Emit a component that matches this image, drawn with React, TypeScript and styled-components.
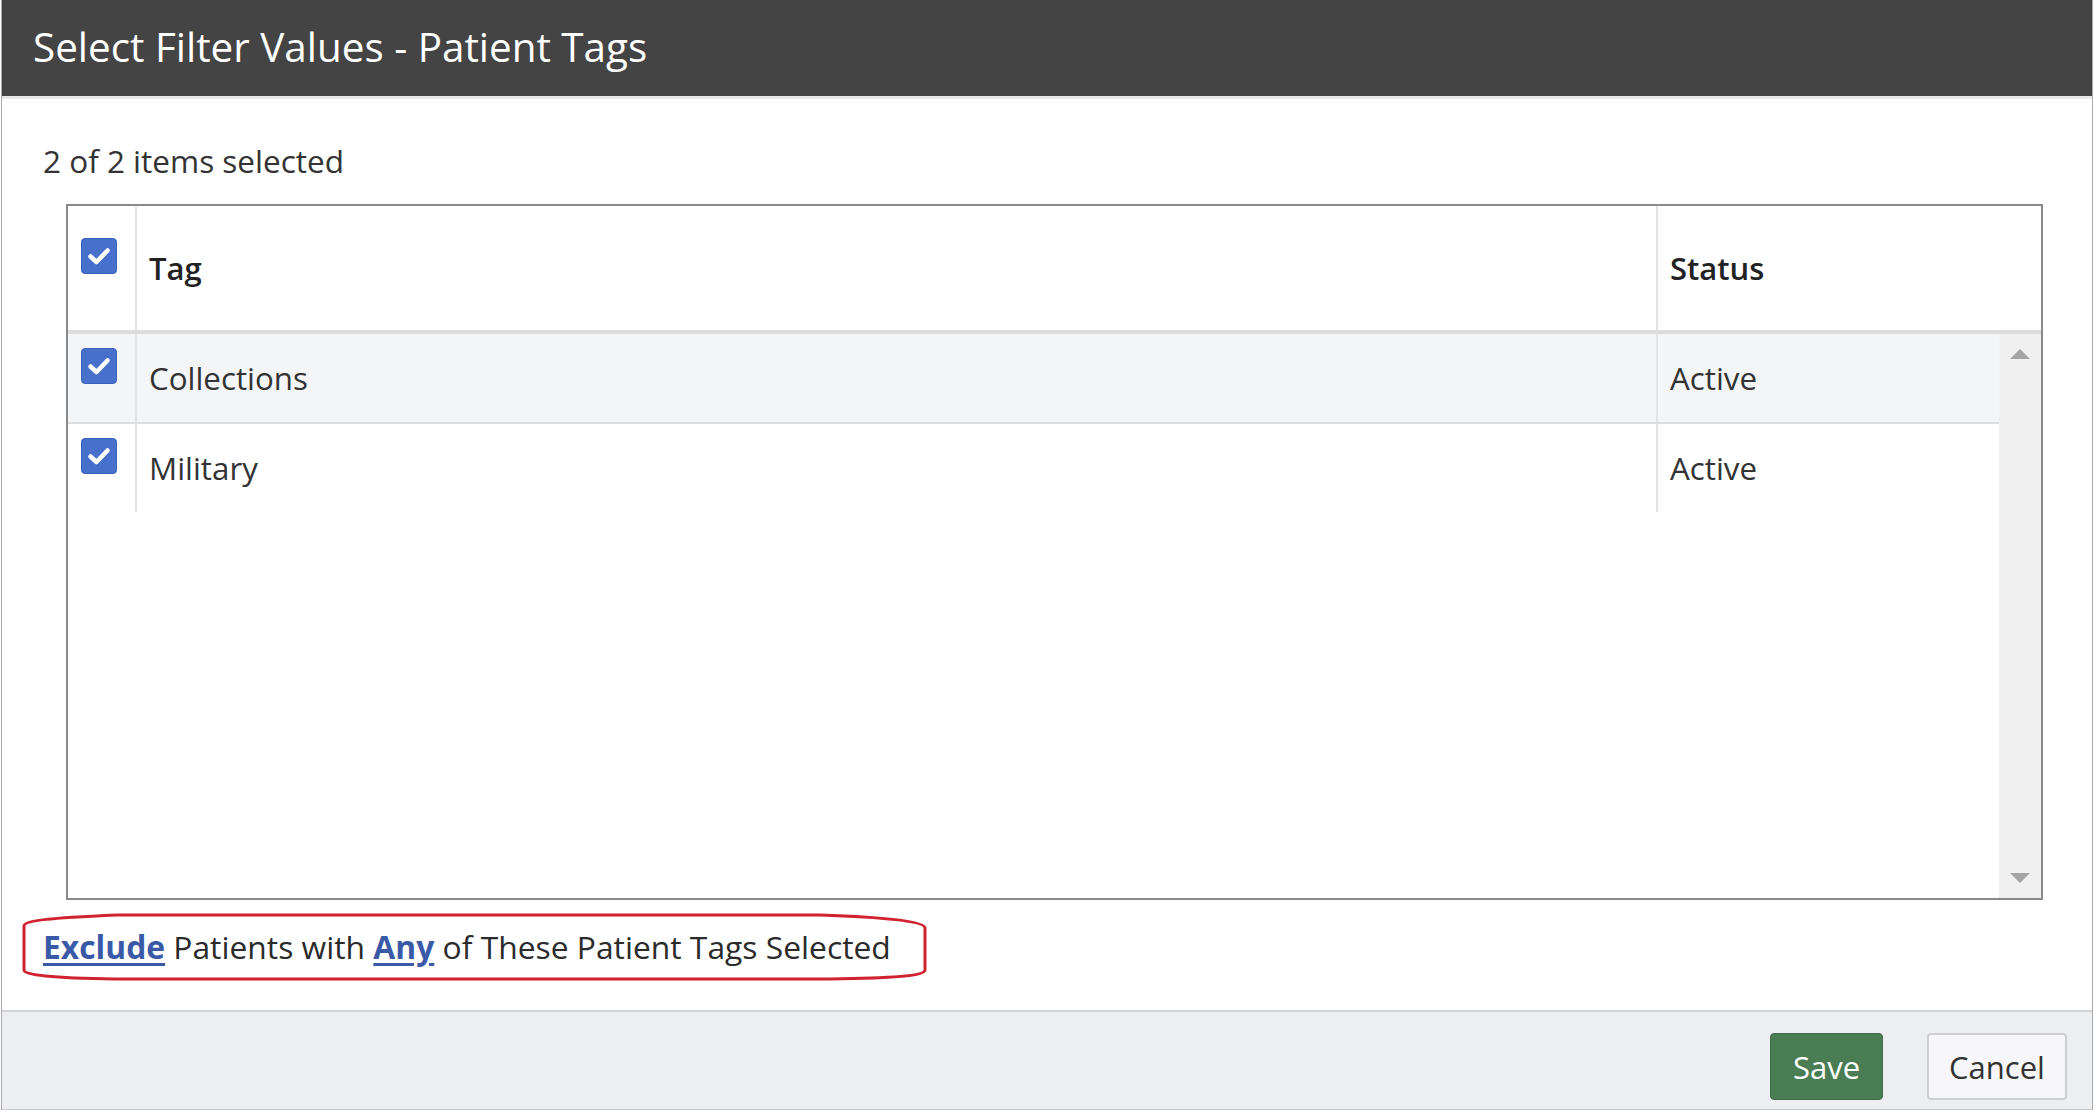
import React from 'react'
import styled, { createGlobalStyle } from 'styled-components'

const GlobalStyle = createGlobalStyle`
  html, body {
    margin: 0;
    padding: 0;
    background: #ffffff;
  }
  body {
    font-family: 'Open Sans', 'Liberation Sans', sans-serif;
    color: #333333;
  }
`

type Tag = { name: string; status: string }

const tags: Tag[] = [
  { name: 'Collections', status: 'Active' },
  { name: 'Military', status: 'Active' },
]

const CheckBox = () => (
  <Box>
    <svg width="36" height="36" viewBox="0 0 36 36">
      <polyline
        points="9.5,18.5 15.5,24 26.5,12.5"
        fill="none"
        stroke="#ffffff"
        strokeWidth="4.5"
        strokeLinecap="round"
        strokeLinejoin="round"
      />
    </svg>
  </Box>
)

const App = () => {
  return (
    <>
      <GlobalStyle />
      <Dialog>
        <TitleBar>
          <Title>Select Filter Values - Patient Tags</Title>
        </TitleBar>
        <Content>
          <Count>2 of 2 items selected</Count>
          <Table>
            <HeadRow>
              <CheckCell>
                <CheckBox />
              </CheckCell>
              <HeadCell $divider>Tag</HeadCell>
              <HeadCell>Status</HeadCell>
            </HeadRow>
            <TableBody>
              <Rows>
                {tags.map((t, i) => (
                  <Row key={t.name} $shaded={i === 0} $last={i === tags.length - 1}>
                    <CheckCell>
                      <CheckBox />
                    </CheckCell>
                    <Cell $divider>{t.name}</Cell>
                    <Cell>{t.status}</Cell>
                  </Row>
                ))}
              </Rows>
              <ScrollTrack>
                <Arrow $up />
                <Arrow />
              </ScrollTrack>
            </TableBody>
          </Table>
          <Oval>
            <OvalLine viewBox="0 0 905 69" preserveAspectRatio="none">
              <path
                d="M 2 14 C 2 8, 30 6, 95 3 L 798 3 C 860 5, 903 9, 903 16 L 903 58 C 903 63, 880 66, 808 67 L 93 67 C 30 66, 2 63, 2 58 Z"
                fill="none"
                stroke="#d1232f"
                strokeWidth="3"
              />
            </OvalLine>
            <RuleText>
              <LinkWord>Exclude</LinkWord> Patients with <LinkWord>Any</LinkWord> of These
              Patient Tags Selected
            </RuleText>
          </Oval>
        </Content>
        <Footer>
          <SaveButton>Save</SaveButton>
          <CancelButton>Cancel</CancelButton>
        </Footer>
      </Dialog>
    </>
  )
}
export default App

export const Dialog = styled.div`
  margin-left: 1px;
  width: 2092px;
  box-sizing: border-box;
  border-left: 1px solid #a8a8a8;
  border-right: 1px solid #a8a8a8;
  display: flex;
  flex-direction: column;
`
export const TitleBar = styled.div`
  height: 96px;
  background: #444444;
  border-bottom: 3px solid #e8e8e8;
  display: flex;
  align-items: center;
  padding-left: 31px;
`
export const Title = styled.h1`
  margin: 0;
  font-size: 40.4px;
  font-weight: 400;
  color: #ffffff;
  line-height: 1;
  padding-bottom: 2px;
`
export const Content = styled.div`
  padding: 41px 0 29px 0;
  display: flex;
  flex-direction: column;
  align-items: flex-start;
`
export const Count = styled.div`
  margin-left: 41px;
  font-size: 31.5px;
  line-height: 42px;
  color: #333333;
`
export const Table = styled.div`
  margin: 22px 0 0 64px;
  width: 1977px;
  height: 696px;
  box-sizing: border-box;
  border: 2px solid #8a8a8a;
  display: flex;
  flex-direction: column;
`
export const HeadRow = styled.div`
  display: grid;
  grid-template-columns: 69px 1521px 1fr;
  height: 128px;
  box-sizing: border-box;
  border-bottom: 4px solid #dcdcdc;
`
export const CheckCell = styled.div`
  display: flex;
  align-items: center;
  padding-left: 13px;
  border-right: 2px solid #e3e3e3;
`
export const Box = styled.span`
  width: 36px;
  height: 36px;
  margin-bottom: 24px;
  box-sizing: border-box;
  border-radius: 4px;
  background: #4670cc;
  border: 1px solid #3b61ba;
  display: flex;
  align-items: center;
  justify-content: center;
  svg {
    display: block;
    margin: -1px;
  }
`
export const HeadCell = styled.div<{ $divider?: boolean }>`
  display: flex;
  align-items: center;
  padding-left: 12px;
  font-size: 31px;
  font-weight: 600;
  color: #222222;
  border-right: ${(p) => (p.$divider ? '2px solid #e3e3e3' : 'none')};
`
export const TableBody = styled.div`
  flex: 1;
  display: flex;
`
export const Rows = styled.div`
  flex: 1;
  display: flex;
  flex-direction: column;
`
export const Row = styled.div<{ $shaded?: boolean; $last?: boolean }>`
  display: grid;
  grid-template-columns: 69px 1521px 1fr;
  height: ${(p) => (p.$last ? '88px' : '90px')};
  box-sizing: border-box;
  background: ${(p) => (p.$shaded ? '#f4f5f7' : '#ffffff')};
  border-bottom: ${(p) => (p.$last ? 'none' : '2px solid #dedede')};
`
export const Cell = styled.div<{ $divider?: boolean }>`
  display: flex;
  align-items: center;
  padding-left: 12px;
  font-size: 31.3px;
  color: #333333;
  border-right: ${(p) => (p.$divider ? '2px solid #e3e3e3' : 'none')};
`
export const ScrollTrack = styled.div`
  width: 42px;
  background: #f0f0f0;
  display: flex;
  flex-direction: column;
  justify-content: space-between;
  align-items: center;
  padding: 15px 0;
`
export const Arrow = styled.span<{ $up?: boolean }>`
  width: 0;
  height: 0;
  border-left: 10px solid transparent;
  border-right: 10px solid transparent;
  ${(p) =>
    p.$up ? 'border-bottom: 10px solid #a5a5a5;' : 'border-top: 10px solid #a5a5a5;'}
`
export const Oval = styled.div`
  position: relative;
  margin: 12px 0 0 20px;
  width: 905px;
  height: 69px;
  box-sizing: border-box;
  padding-left: 21px;
  display: flex;
  align-items: center;
`
export const OvalLine = styled.svg`
  position: absolute;
  left: 0;
  top: 0;
  width: 905px;
  height: 69px;
  pointer-events: none;
`
export const RuleText = styled.div`
  font-size: 31.8px;
  line-height: 42px;
  color: #2b2b2b;
  white-space: nowrap;
`
export const LinkWord = styled.a`
  font-weight: 700;
  color: #3a5aa7;
  text-decoration: underline;
  text-decoration-thickness: 3px;
  text-underline-offset: 4px;
  cursor: pointer;
`
export const Footer = styled.div`
  height: 100px;
  box-sizing: border-box;
  background: #eceef1;
  border-top: 2px solid #d3d3d3;
  border-bottom: 1px solid #c8c8c8;
  display: flex;
  justify-content: flex-end;
  align-items: flex-start;
  gap: 44px;
  padding: 21px 25px 0 0;
`
export const SaveButton = styled.button`
  width: 113px;
  height: 67px;
  border-radius: 4px;
  background: #4a7d53;
  border: 1px solid #3e6c46;
  color: #ffffff;
  font-family: 'Open Sans', 'Liberation Sans', sans-serif;
  font-size: 31px;
  padding: 0;
  cursor: pointer;
`
export const CancelButton = styled.button`
  width: 140px;
  height: 67px;
  border-radius: 4px;
  background: #f7f7f9;
  border: 2px solid #cfcfcf;
  color: #333333;
  font-family: 'Open Sans', 'Liberation Sans', sans-serif;
  font-size: 31px;
  padding: 0;
  cursor: pointer;
`
